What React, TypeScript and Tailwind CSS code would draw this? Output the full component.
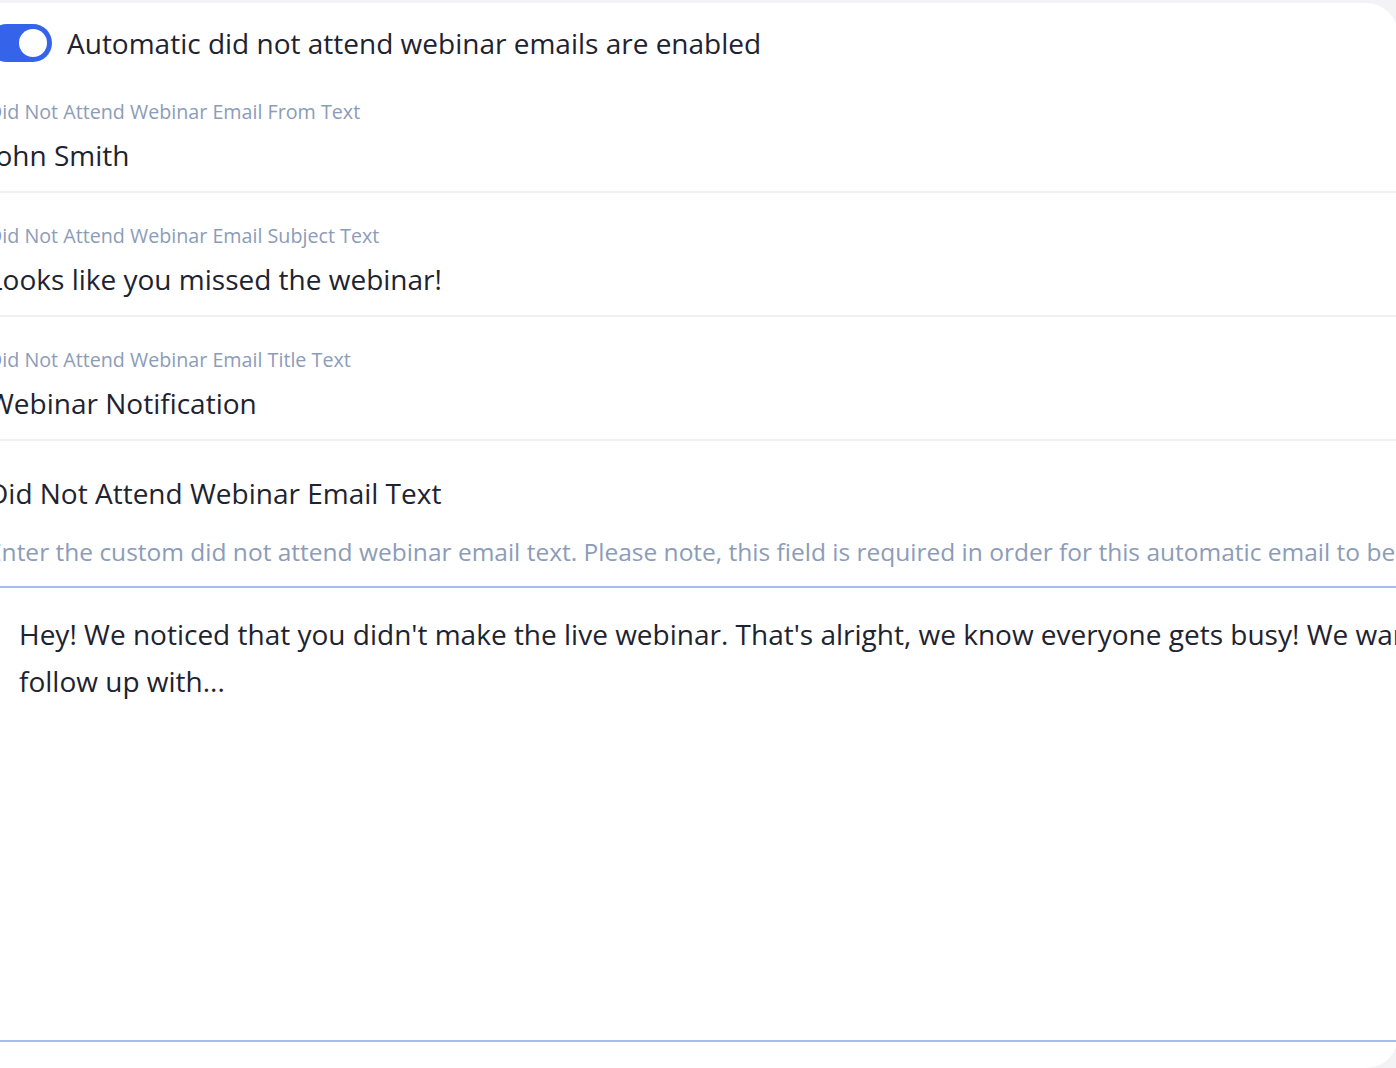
export default function App() {
  const fields = [
    { label: "Did Not Attend Webinar Email From Text", value: "John Smith" },
    { label: "Did Not Attend Webinar Email Subject Text", value: "Looks like you missed the webinar!" },
    { label: "Did Not Attend Webinar Email Title Text", value: "Webinar Notification" },
  ];

  return (
    <div
      className="h-[1068px] w-[1396px] overflow-hidden bg-[#f3f3f5] pt-[3px]"
      style={{ fontFamily: "'Open Sans', Lato, sans-serif" }}
    >
      <div className="-ml-[40px] h-[1065px] w-[1438px] overflow-hidden rounded-r-[32px] bg-white pl-[28px] pt-[20px]">
        {/* Toggle row */}
        <div className="flex items-center gap-[15px]">
          <div className="flex h-[38px] w-[64px] shrink-0 items-center justify-end rounded-full bg-[#3563e9] pr-[5px]">
            <div className="h-[28px] w-[28px] rounded-full bg-white" />
          </div>
          <span className="whitespace-nowrap text-[28px] leading-[40px] text-[#1e2330]">
            Automatic did not attend webinar emails are enabled
          </span>
        </div>

        {/* Text fields */}
        <div className="mt-[16px] w-[1500px]">
          {fields.map((f, i) => (
            <div
              key={f.label}
              className={`border-b-2 border-[#eef0f4] pb-[16px] ${i === 0 ? "pt-[19px]" : "pt-[29px]"}`}
            >
              <div className="whitespace-nowrap text-[19.7px] leading-[28px] text-[#8c9cb8]">{f.label}</div>
              <div className="mt-[9px] whitespace-nowrap text-[28px] leading-[40px] text-[#1e2330]">{f.value}</div>
            </div>
          ))}
        </div>

        {/* Email text */}
        <div className="w-[1500px] pt-[32px]">
          <div className="whitespace-nowrap text-[28px] leading-[40px] text-[#1e2330]">
            Did Not Attend Webinar Email Text
          </div>
          <div className="mt-[21px] whitespace-nowrap text-[24.5px] leading-[36px] text-[#8c9cb8]">
            Enter the custom did not attend webinar email text. Please note, this field is required in order for this automatic email to be sent.
          </div>
          <div className="mt-[16px] h-[456px] border-y-2 border-[#a8bbee] pl-[31px] pt-[23px]">
            <div className="whitespace-nowrap text-[28px] leading-[47px] text-[#1e2330]">
              Hey! We noticed that you didn't make the live webinar. That's alright, we know everyone gets busy! We want to
            </div>
            <div className="whitespace-nowrap text-[28px] leading-[47px] text-[#1e2330]">follow up with...</div>
          </div>
        </div>
      </div>
    </div>
  );
}
